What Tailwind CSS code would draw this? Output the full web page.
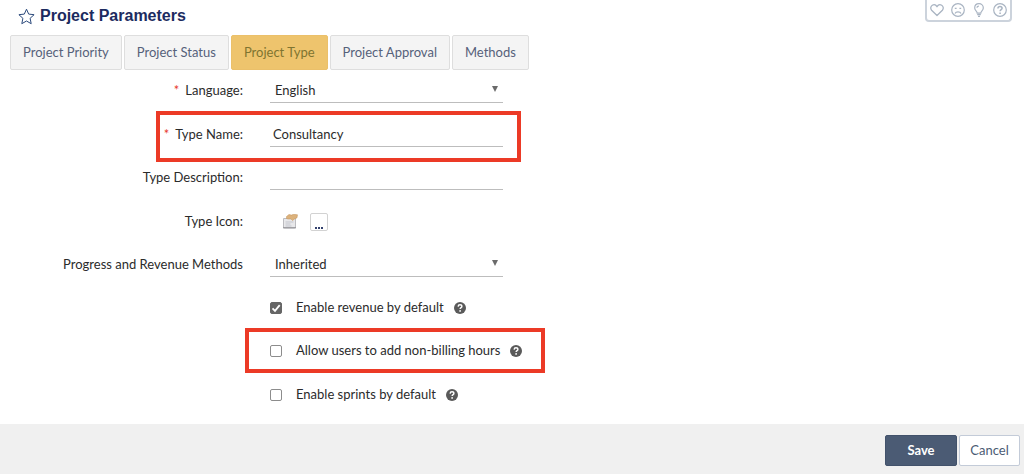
<!DOCTYPE html>
<html lang="en">
<head>
<meta charset="utf-8">
<meta name="viewport" content="width=device-width, initial-scale=1">
<title>Project Parameters</title>
<script src="https://cdn.jsdelivr.net/npm/@tailwindcss/browser@4"></script>
</head>
<body class="flex min-h-screen flex-col bg-white font-['Lato',sans-serif] text-[13px] text-[#2b2b2b]">
<svg class="hidden" aria-hidden="true">
  <symbol id="help" viewBox="0 0 12 12">
    <circle cx="6" cy="6" r="6" fill="#5a5a5a"/>
    <path d="M4.1 4.6C4.2 3.3 5 2.8 6 2.8c1.1 0 1.9.6 1.9 1.6C7.900 5.600 6.100 5.700 6.100 7" fill="none" stroke="#fff" stroke-width="1.400"/>
    <circle cx="6.100" cy="8.900" r=".9" fill="#fff"/>
  </symbol>
  <symbol id="tick" viewBox="0 0 12 12">
    <path d="M2.500 6.300 5 8.800 9.700 3.200" fill="none" stroke="#fff" stroke-width="1.800"/>
  </symbol>
  <symbol id="arrow" viewBox="0 0 6 6">
    <path d="M0 0h6L3 6z" fill="#6b6b6b"/>
  </symbol>
</svg>

<header class="flex h-[35px] items-start justify-between pr-3 pl-[18px]">
  <div class="flex items-center gap-[5px] pt-1">
    <button type="button" aria-label="Add to favourites">
      <svg class="block size-[17px]" viewBox="0 0 17 17" fill="none" stroke="#2c4a7c" stroke-width="1" stroke-linejoin="round"><path d="M8.500 1.200 10.700 6.100 16.100 6.700 12.100 10.300 13.200 15.700 8.500 13 3.800 15.700 4.900 10.300.9 6.700 6.300 6.100z"/></svg>
    </button>
    <h1 class="font-['Liberation_Sans',sans-serif] text-base leading-6 font-bold text-[#1c2b60]">Project Parameters</h1>
  </div>
  <div class="flex h-[22px] items-center gap-[7px] rounded-b-sm border-2 border-t-0 border-[#ccd3dc] px-[3px] text-[#a9b4c2]">
    <button type="button" aria-label="Like"><svg class="block size-3.5" viewBox="0 0 14 14" fill="none" stroke="currentColor" stroke-width="1.300" stroke-linejoin="round"><path d="M7 12.500 1.600 7.200C.2 5.600.6 3.200 2.300 2.200 4 1.300 6 2 7 3.700 8 2 10 1.300 11.700 2.200c1.700 1 2.100 3.400.7 5z"/></svg></button>
    <button type="button" aria-label="Dislike"><svg class="block size-3.5" viewBox="0 0 14 14" fill="none" stroke="currentColor" stroke-width="1.200"><circle cx="7" cy="7" r="6.300"/><path d="M4 10.500C5 8.200 9 8.200 10 10.500M3.800 5.300h1.800M8.400 5.300h1.800"/></svg></button>
    <button type="button" aria-label="Suggest"><svg class="block size-3.5" viewBox="0 0 14 14" fill="none" stroke="currentColor" stroke-width="1.200"><path d="M5.200 10.200C5.200 8 2.700 7.500 2.700 4.900 2.700 2.400 4.600.7 7 .7s4.300 1.700 4.300 4.200c0 2.600-2.500 3.100-2.500 5.300zM5.200 11.700h3.600M6 13.300h2M5 4.800C5 3.700 5.900 3 7 3"/></svg></button>
    <button type="button" aria-label="Help"><svg class="block size-3.5" viewBox="0 0 14 14" fill="none" stroke="currentColor" stroke-width="1.200"><circle cx="7" cy="7" r="6.300"/><path d="M4.900 5.500C5 4 6 3.500 7 3.500c1.200 0 2.100.7 2.100 1.800C9.100 6.600 7.100 6.700 7.100 8.300M7.100 9.500v1.400" stroke-width="1.500"/></svg></button>
  </div>
</header>

<nav class="flex gap-[2px] pl-2.5 text-[#56617a]">
  <button type="button" class="h-[35px] rounded-xs border border-[#dedede] bg-[#f4f4f4] px-3">Project Priority</button>
  <button type="button" class="h-[35px] rounded-xs border border-[#dedede] bg-[#f4f4f4] px-3">Project Status</button>
  <button type="button" class="h-[35px] rounded-xs border border-[#ebc06a] bg-[#eec46d] px-3 text-[#7f7430]" aria-current="page">Project Type</button>
  <button type="button" class="h-[35px] rounded-xs border border-[#dedede] bg-[#f4f4f4] px-3">Project Approval</button>
  <button type="button" class="h-[35px] rounded-xs border border-[#dedede] bg-[#f4f4f4] px-3">Methods</button>
</nav>

<form class="flex flex-1 flex-col">
  <div class="grid min-h-[348px] w-full max-w-[548px] auto-rows-fr">
    <div class="flex gap-[27px]">
      <label for="language" class="w-[243px] shrink-0 pt-2 text-right leading-6"><span class="mr-1.5 text-[#e8392b]">*</span>Language:</label>
      <div class="relative h-[33px] w-[233px]">
        <select id="language" class="size-full appearance-none border-b border-[#bdbdbd] bg-transparent pt-2 pl-[5px] leading-6 outline-none"><option>English</option></select>
        <svg class="pointer-events-none absolute top-4 right-[5px] size-1.5"><use href="#arrow"/></svg>
      </div>
    </div>
    <div class="relative flex gap-[27px]">
      <label for="name" class="w-[243px] shrink-0 pt-2 text-right leading-6"><span class="mr-1.5 text-[#e8392b]">*</span>Type Name:</label>
      <input id="name" type="text" value="Consultancy" class="h-[33px] w-[233px] border-b border-[#bdbdbd] pt-2 pl-[3px] leading-6 outline-none">
      <div class="pointer-events-none absolute -top-[3px] left-[156px] h-[51px] w-[365px] border-4 border-[#ec3a26]"></div>
    </div>
    <div class="flex gap-[27px]">
      <label for="description" class="w-[243px] shrink-0 pt-2 text-right leading-6">Type Description:</label>
      <input id="description" type="text" class="h-[33px] w-[233px] border-b border-[#bdbdbd] pt-2 pl-[3px] leading-6 outline-none">
    </div>
    <div class="flex gap-[27px]">
      <label for="icon" class="w-[243px] shrink-0 pt-2 text-right leading-6">Type Icon:</label>
      <div class="flex h-[33px] items-center gap-3 pt-2.5 pl-3">
        <svg class="size-4" viewBox="0 0 16 16"><path d="M1.500 4.500h12v8.500c0 .6-.4 1-1 1h-10c-.6 0-1-.4-1-1z" fill="#e8e8ea" stroke="#bcbcc0"/><path d="M1 13.800h13" stroke="#8b8b8f"/><path d="M3.500 8h8M3.500 10h5M3.500 12h6" stroke="#c3c5cd"/><path d="M4.500 2.500 7 .5l2.500.6 2-.8 4 .5-.5 3-2.500 1.200-2 1.500-1.500-1.500H6L4.500 4.500z" fill="#dcb27c" stroke="#c3935a" stroke-width=".5"/></svg>
        <button id="icon" type="button" aria-label="Choose icon" class="flex size-[18px] items-end justify-center rounded-xs border border-[#d2d2d2] bg-white text-[#33416e]"><svg class="mb-px block h-0.5 w-2" viewBox="0 0 8 2" fill="currentColor"><path d="M0 0h2v2H0zM3 0h2v2H3zM6 0h2v2H6z"/></svg></button>
      </div>
    </div>
    <div class="flex gap-[27px]">
      <label for="methods" class="w-[243px] shrink-0 pt-2 text-right leading-6">Progress and Revenue Methods</label>
      <div class="relative h-[33px] w-[233px]">
        <select id="methods" class="size-full appearance-none border-b border-[#bdbdbd] bg-transparent pt-2 pl-[5px] leading-6 outline-none"><option>Inherited</option></select>
        <svg class="pointer-events-none absolute top-4 right-[5px] size-1.5"><use href="#arrow"/></svg>
      </div>
    </div>
    <div class="flex items-start pt-2 pl-[270px]">
      <label class="flex h-6 items-center gap-3.5">
        <span class="relative flex"><input type="checkbox" checked class="peer size-3 appearance-none rounded-xs border border-[#8c8c8c] checked:border-[#666] checked:bg-[#666]"><svg class="pointer-events-none absolute inset-0 hidden size-3 peer-checked:block"><use href="#tick"/></svg></span>
        Enable revenue by default</label>
      <svg class="mt-1.5 ml-2.5 size-3" role="img" aria-label="Help"><use href="#help"/></svg>
    </div>
    <div class="relative flex items-start pt-2 pl-[270px]">
      <label class="flex h-6 items-center gap-3.5">
        <span class="relative flex"><input type="checkbox" class="peer size-3 appearance-none rounded-xs border border-[#8c8c8c] checked:border-[#666] checked:bg-[#666]"><svg class="pointer-events-none absolute inset-0 hidden size-3 peer-checked:block"><use href="#tick"/></svg></span>
        Allow users to add non-billing hours</label>
      <svg class="mt-1.5 ml-2.5 size-3" role="img" aria-label="Help"><use href="#help"/></svg>
      <div class="pointer-events-none absolute -top-[3px] left-[245px] h-[45px] w-[300px] border-4 border-[#ec3a26]"></div>
    </div>
    <div class="flex items-start pt-2 pl-[270px]">
      <label class="flex h-6 items-center gap-3.5">
        <span class="relative flex"><input type="checkbox" class="peer size-3 appearance-none rounded-xs border border-[#8c8c8c] checked:border-[#666] checked:bg-[#666]"><svg class="pointer-events-none absolute inset-0 hidden size-3 peer-checked:block"><use href="#tick"/></svg></span>
        Enable sprints by default</label>
      <svg class="mt-1.5 ml-2.5 size-3" role="img" aria-label="Help"><use href="#help"/></svg>
    </div>
  </div>
  <footer class="mt-auto flex justify-end gap-0.5 bg-[#f0f0f0] pt-[11px] pr-1 pb-2">
    <button type="submit" class="h-[31px] w-[72px] rounded-xs border border-[#42526b] bg-[#4b5b74] font-bold text-white">Save</button>
    <button type="button" class="h-[31px] w-[61px] rounded-xs border border-[#c3cbd8] bg-white text-[#4b5b74]">Cancel</button>
  </footer>
</form>
</body>
</html>
